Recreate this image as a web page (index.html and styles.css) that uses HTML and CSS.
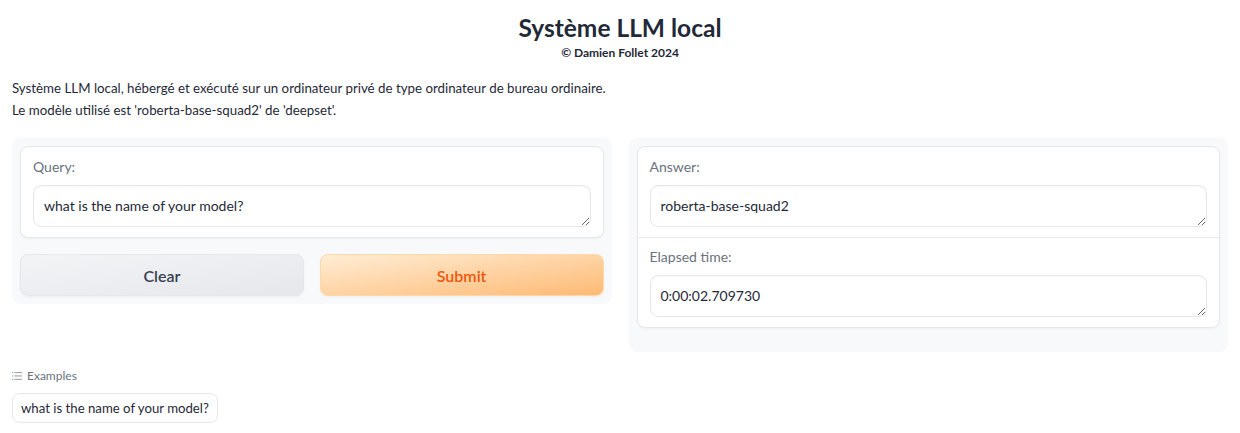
FILE: index.html
```html
<!DOCTYPE html>
<html lang="fr">
<head>
<meta charset="utf-8">
<title>Système LLM local</title>
<link rel="stylesheet" href="styles.css">
</head>
<body>
<div class="app">
  <header class="header">
    <h1 class="title">Système LLM local</h1>
    <p class="subtitle">© Damien Follet 2024</p>
  </header>
  <div class="desc">
    <p>Système LLM local, hébergé et exécuté sur un ordinateur privé de type ordinateur de bureau ordinaire.</p>
    <p>Le modèle utilisé est 'roberta-base-squad2' de 'deepset'.</p>
  </div>
  <div class="row">
    <div class="panel panel-left">
      <div class="block">
        <label class="field">
          <span class="label">Query:</span>
          <textarea class="input" rows="1">what is the name of your model?</textarea>
        </label>
      </div>
      <div class="buttons">
        <button class="btn btn-secondary">Clear</button>
        <button class="btn btn-primary">Submit</button>
      </div>
    </div>
    <div class="panel panel-right">
      <div class="block block-stack">
        <label class="field">
          <span class="label">Answer:</span>
          <textarea class="input" rows="1">roberta-base-squad2</textarea>
        </label>
        <label class="field field-divided">
          <span class="label">Elapsed time:</span>
          <textarea class="input" rows="1">0:00:02.709730</textarea>
        </label>
      </div>
    </div>
  </div>
  <div class="examples">
    <div class="examples-label">
      <svg class="ex-icon" width="10" height="10" viewBox="0 0 10 10" aria-hidden="true">
        <g fill="#9ca3af">
          <rect x="0" y="1" width="1.2" height="1.2"/>
          <rect x="0" y="4.4" width="1.2" height="1.2"/>
          <rect x="0" y="7.8" width="1.2" height="1.2"/>
          <rect x="2.4" y="1" width="7.6" height="1.1"/>
          <rect x="2.4" y="4.4" width="7.6" height="1.1"/>
          <rect x="2.4" y="7.8" width="7.6" height="1.1"/>
        </g>
      </svg>
      <span>Examples</span>
    </div>
    <button class="chip">what is the name of your model?</button>
  </div>
</div>
</body>
</html>
```

FILE: styles.css
```css
* { box-sizing: border-box; }
body {
  margin: 0;
  background: #ffffff;
  font-family: Lato, "Noto Sans", "Liberation Sans", sans-serif;
  color: #1f2937;
}
.app {
  padding: 0 12px;
}
.header {
  text-align: center;
  padding-top: 12px;
}
.title {
  margin: 0;
  font-size: 24.5px;
  line-height: 32px;
  font-weight: 700;
  color: #1f2937;
}
.subtitle {
  margin: 2px 0 0;
  font-size: 12px;
  line-height: 14px;
  font-weight: 700;
  color: #1f2937;
}
.desc {
  margin-top: 17px;
  font-size: 13.3px;
  line-height: 22px;
  color: #1f2937;
}
.desc p { margin: 0; }
.row {
  margin-top: 17px;
  display: flex;
  gap: 17px;
  align-items: flex-start;
}
.panel {
  flex: 1;
  background: #f8f9fb;
  border-radius: 8px;
  padding: 8px;
}
.panel-right {
  padding-bottom: 24px;
}
.block {
  background: #ffffff;
  border: 1px solid #e5e7eb;
  border-radius: 8px;
  box-shadow: 0 1px 2px rgba(0,0,0,0.04);
}
.field {
  display: flex;
  flex-direction: column;
  padding: 10px 12px 10px;
}
.field-divided {
  border-top: 1px solid #e5e7eb;
  padding-top: 9px;
}
.label {
  font-size: 14px;
  line-height: 20px;
  color: #6b7280;
  margin-bottom: 8px;
}
.input {
  display: block;
  width: 100%;
  height: 42px;
  resize: vertical;
  font-family: inherit;
  font-size: 14px;
  line-height: 20px;
  color: #1f2937;
  padding: 10px 10px;
  border: 1px solid #e5e7eb;
  border-radius: 8px;
  background: #ffffff;
  box-shadow: inset 0 1px 2px rgba(0,0,0,0.04);
  outline: none;
  overflow: hidden;
}
.buttons {
  margin-top: 16px;
  display: flex;
  gap: 16px;
}
.btn {
  flex: 1;
  height: 42px;
  border-radius: 8px;
  font-family: inherit;
  font-size: 16px;
  font-weight: 600;
  cursor: pointer;
  box-shadow: 0 1px 2px rgba(0,0,0,0.05);
}
.btn-secondary {
  background: linear-gradient(to bottom right, #f3f4f6, #e5e7eb);
  border: 1px solid #e5e7eb;
  color: #374151;
}
.btn-primary {
  background: linear-gradient(to bottom right, #ffedd5, #fdba74);
  border: 1px solid #fed7aa;
  color: #ea580c;
}
.examples {
  margin-top: 16px;
}
.examples-label {
  display: flex;
  align-items: center;
  gap: 5px;
  font-size: 12px;
  line-height: 16px;
  color: #6b7280;
}
.chip {
  margin-top: 9px;
  font-family: inherit;
  font-size: 13.2px;
  line-height: 18px;
  color: #1f2937;
  background: #ffffff;
  border: 1px solid #e5e7eb;
  border-radius: 8px;
  padding: 5px 8px;
}
```
